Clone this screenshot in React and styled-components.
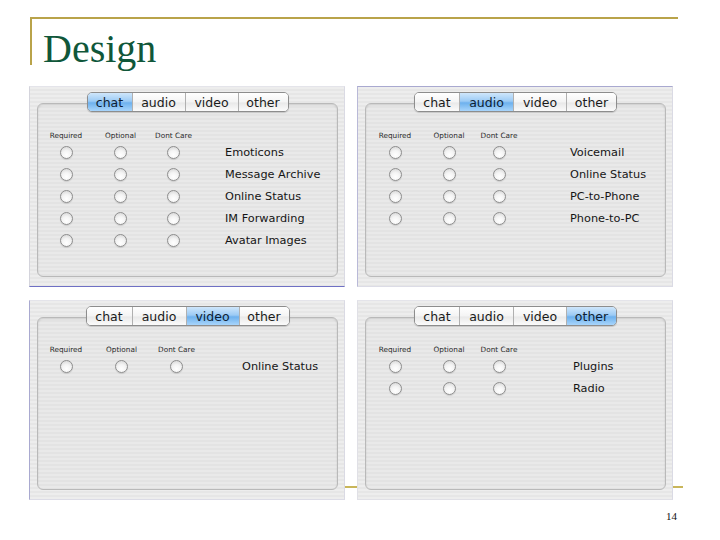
import React from 'react';
import styled, { createGlobalStyle } from 'styled-components';

const GlobalStyle = createGlobalStyle`
  html, body {
    margin: 0;
    padding: 0;
    background: #ffffff;
  }
  body {
    width: 720px;
    height: 540px;
    overflow: hidden;
  }
`;

const Slide = styled.div`
  position: relative;
  width: 720px;
  height: 540px;
  box-sizing: border-box;
  padding-top: 17px;
  background: #ffffff;
`;

const Header = styled.header`
  margin-left: 30px;
  width: 648px;
  height: 48px;
  border-top: 2px solid #b9a34a;
  border-left: 2px solid #b9a34a;
  box-sizing: border-box;
`;

const Title = styled.h1`
  margin: 0;
  padding: 10px 0 0 11px;
  font-family: 'Liberation Serif', 'DejaVu Serif', serif;
  font-weight: normal;
  font-size: 40px;
  line-height: 40px;
  color: #10573a;
`;

const Grid = styled.div`
  display: grid;
  grid-template-columns: 316px 316px;
  grid-template-rows: 201px 200px;
  column-gap: 12px;
  row-gap: 13px;
  margin: 21px 0 0 29px;
`;

const BottomRule = styled.div`
  position: absolute;
  left: 30px;
  top: 486px;
  width: 653px;
  height: 2px;
  background: #c9b65a;
  z-index: 0;
`;

const Panel = styled.section`
  position: relative;
  z-index: 1;
  display: flex;
  flex-direction: column;
  box-sizing: border-box;
  padding: 5px 6px 9px 7px;
  background: repeating-linear-gradient(
    to bottom,
    #ededed 0px,
    #ededed 2px,
    #e6e6e6 2px,
    #e6e6e6 4px
  );
  border: 1px solid #dadae4;
  border-left-color: ${(p) => p.$left};
  border-bottom-color: ${(p) => p.$bottom};
  border-top-color: ${(p) => p.$top};
`;

const Tabs = styled.div`
  position: relative;
  z-index: 2;
  align-self: center;
  display: flex;
  height: 20px;
  border: 1px solid #8d8d8d;
  border-radius: 5px;
  overflow: hidden;
  box-sizing: border-box;
  box-shadow: 0 1px 1px rgba(0, 0, 0, 0.15);
`;

const Tab = styled.div`
  width: ${(p) => p.$w}px;
  display: flex;
  align-items: center;
  justify-content: center;
  box-sizing: border-box;
  border-left: 1px solid #b0b0b0;
  font-family: 'DejaVu Sans', 'Liberation Sans', sans-serif;
  font-size: 12.5px;
  color: ${(p) => (p.$active ? '#0d1d33' : '#1a1a1a')};
  background: ${(p) =>
    p.$active
      ? 'linear-gradient(to bottom, #cfe6fb 0%, #9ccbf5 45%, #6eb1ee 55%, #a8d5fb 100%)'
      : 'linear-gradient(to bottom, #ffffff 0%, #f4f4f4 50%, #e9e9e9 55%, #fbfbfb 100%)'};
  &:first-child {
    border-left: none;
  }
`;

const Box = styled.div`
  flex: 1;
  margin-top: -9px;
  padding-top: 23px;
  border: 1px solid #b9b9b9;
  border-radius: 6px;
  box-sizing: border-box;
  background: repeating-linear-gradient(
    to bottom,
    #e9e9e9 0px,
    #e9e9e9 2px,
    #e3e3e3 2px,
    #e3e3e3 4px
  );
  box-shadow: inset 0 1px 2px rgba(0, 0, 0, 0.12);
`;

const Options = styled.div`
  display: grid;
  grid-template-columns: ${(p) => `${p.$first}px repeat(2, ${p.$step}px) 1fr`};
  grid-auto-rows: 22px;
  grid-template-rows: 14px;
  align-items: center;
  justify-items: center;
`;

const ColHead = styled.div`
  font-family: 'DejaVu Sans', 'Liberation Sans', sans-serif;
  font-size: 7.3px;
  color: #2a2a2a;
  white-space: nowrap;
  align-self: center;
  padding-top: 3px;
`;

const Radio = styled.span`
  width: 13px;
  height: 13px;
  border-radius: 50%;
  box-sizing: border-box;
  border: 1px solid #8e8e8e;
  background: radial-gradient(circle at 50% 72%, #ffffff 0%, #f4f4f4 45%, #d0d0d0 100%);
  box-shadow: 0 1px 1px rgba(0, 0, 0, 0.12);
`;

const Feature = styled.div`
  justify-self: start;
  padding-left: ${(p) => p.$indent}px;
  font-family: 'DejaVu Sans', 'Liberation Sans', sans-serif;
  font-size: 11.3px;
  color: #151515;
  white-space: nowrap;
`;

const PageNo = styled.div`
  position: absolute;
  left: 666px;
  top: 510px;
  font-family: 'Liberation Serif', serif;
  font-size: 11px;
  color: #111;
`;

const TAB_NAMES = ['chat', 'audio', 'video', 'other'];

const panels = [
  {
    active: 'chat',
    widths: [44, 53, 53, 50],
    first: 56,
    step: 53,
    indent: 25,
    features: ['Emoticons', 'Message Archive', 'Online Status', 'IM Forwarding', 'Avatar Images'],
    border: { left: '#d4d4dc', bottom: '#6f70c4', top: '#e4e4ea' },
  },
  {
    active: 'audio',
    widths: [44, 54, 53, 50],
    first: 58,
    step: 50,
    indent: 46,
    features: ['Voicemail', 'Online Status', 'PC-to-Phone', 'Phone-to-PC'],
    border: { left: '#b9b9d8', bottom: '#dcdce6', top: '#a9a9d0' },
  },
  {
    active: 'video',
    widths: [45, 54, 53, 50],
    first: 56,
    step: 55,
    indent: 38,
    features: ['Online Status'],
    border: { left: '#a9a9d0', bottom: '#dcdce6', top: '#e4e4ea' },
  },
  {
    active: 'other',
    widths: [44, 54, 53, 50],
    first: 58,
    step: 50,
    indent: 49,
    features: ['Plugins', 'Radio'],
    border: { left: '#e0e0e6', bottom: '#e0e0e6', top: '#e4e4ea' },
  },
];

function PrefPanel({ data }) {
  return (
    <Panel $left={data.border.left} $bottom={data.border.bottom} $top={data.border.top}>
      <Tabs>
        {TAB_NAMES.map((t, i) => (
          <Tab key={t} $w={data.widths[i]} $active={t === data.active}>
            {t}
          </Tab>
        ))}
      </Tabs>
      <Box>
        <Options $first={data.first} $step={data.step}>
          <ColHead>Required</ColHead>
          <ColHead>Optional</ColHead>
          <ColHead>Dont Care</ColHead>
          <span />
          {data.features.map((f) => (
            <React.Fragment key={f}>
              <Radio />
              <Radio />
              <Radio />
              <Feature $indent={data.indent}>{f}</Feature>
            </React.Fragment>
          ))}
        </Options>
      </Box>
    </Panel>
  );
}

export default function App() {
  return (
    <>
      <GlobalStyle />
      <Slide>
        <Header>
          <Title>Design</Title>
        </Header>
        <Grid>
          {panels.map((p) => (
            <PrefPanel key={p.active} data={p} />
          ))}
        </Grid>
        <BottomRule />
        <PageNo>14</PageNo>
      </Slide>
    </>
  );
}
